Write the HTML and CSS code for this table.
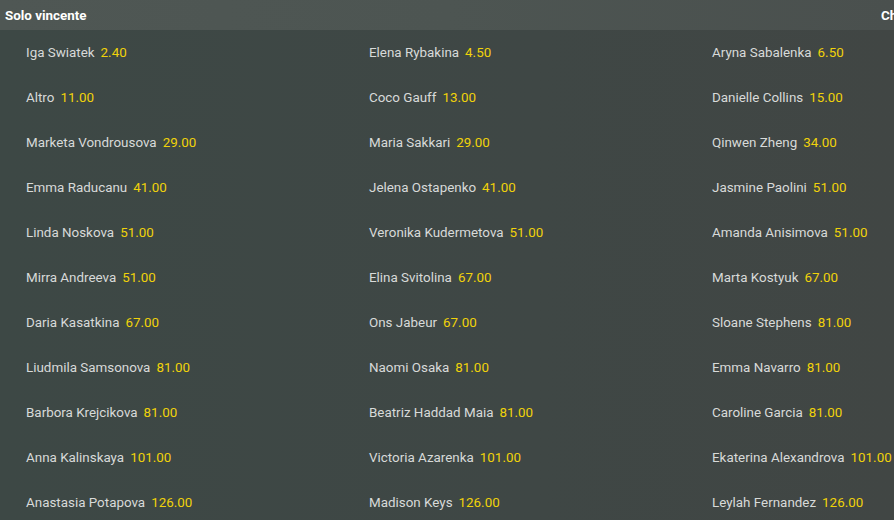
FILE: index.html
```html
<!DOCTYPE html>
<html lang="it">
<head>
<meta charset="utf-8">
<title>Solo vincente</title>
<link rel="stylesheet" href="styles.css">
</head>
<body>
<div class="market">
  <div class="tabs">
    <div class="tab tab-first">Solo vincente</div>
    <div class="tab">Chi vincerà</div>
  </div>
  <div class="grid">
    <div class="cell"><span class="name">Iga Swiatek</span><span class="odds">2.40</span></div>
    <div class="cell"><span class="name">Elena Rybakina</span><span class="odds">4.50</span></div>
    <div class="cell"><span class="name">Aryna Sabalenka</span><span class="odds">6.50</span></div>
    <div class="cell"><span class="name">Altro</span><span class="odds">11.00</span></div>
    <div class="cell"><span class="name">Coco Gauff</span><span class="odds">13.00</span></div>
    <div class="cell"><span class="name">Danielle Collins</span><span class="odds">15.00</span></div>
    <div class="cell"><span class="name">Marketa Vondrousova</span><span class="odds">29.00</span></div>
    <div class="cell"><span class="name">Maria Sakkari</span><span class="odds">29.00</span></div>
    <div class="cell"><span class="name">Qinwen Zheng</span><span class="odds">34.00</span></div>
    <div class="cell"><span class="name">Emma Raducanu</span><span class="odds">41.00</span></div>
    <div class="cell"><span class="name">Jelena Ostapenko</span><span class="odds">41.00</span></div>
    <div class="cell"><span class="name">Jasmine Paolini</span><span class="odds">51.00</span></div>
    <div class="cell"><span class="name">Linda Noskova</span><span class="odds">51.00</span></div>
    <div class="cell"><span class="name">Veronika Kudermetova</span><span class="odds">51.00</span></div>
    <div class="cell"><span class="name">Amanda Anisimova</span><span class="odds">51.00</span></div>
    <div class="cell"><span class="name">Mirra Andreeva</span><span class="odds">51.00</span></div>
    <div class="cell"><span class="name">Elina Svitolina</span><span class="odds">67.00</span></div>
    <div class="cell"><span class="name">Marta Kostyuk</span><span class="odds">67.00</span></div>
    <div class="cell"><span class="name">Daria Kasatkina</span><span class="odds">67.00</span></div>
    <div class="cell"><span class="name">Ons Jabeur</span><span class="odds">67.00</span></div>
    <div class="cell"><span class="name">Sloane Stephens</span><span class="odds">81.00</span></div>
    <div class="cell"><span class="name">Liudmila Samsonova</span><span class="odds">81.00</span></div>
    <div class="cell"><span class="name">Naomi Osaka</span><span class="odds">81.00</span></div>
    <div class="cell"><span class="name">Emma Navarro</span><span class="odds">81.00</span></div>
    <div class="cell"><span class="name">Barbora Krejcikova</span><span class="odds">81.00</span></div>
    <div class="cell"><span class="name">Beatriz Haddad Maia</span><span class="odds">81.00</span></div>
    <div class="cell"><span class="name">Caroline Garcia</span><span class="odds">81.00</span></div>
    <div class="cell"><span class="name">Anna Kalinskaya</span><span class="odds">101.00</span></div>
    <div class="cell"><span class="name">Victoria Azarenka</span><span class="odds">101.00</span></div>
    <div class="cell"><span class="name">Ekaterina Alexandrova</span><span class="odds">101.00</span></div>
    <div class="cell"><span class="name">Anastasia Potapova</span><span class="odds">126.00</span></div>
    <div class="cell"><span class="name">Madison Keys</span><span class="odds">126.00</span></div>
    <div class="cell"><span class="name">Leylah Fernandez</span><span class="odds">126.00</span></div>
  </div>
</div>
</body>
</html>
```
FILE: styles.css
```css
html, body {
  margin: 0;
  padding: 0;
  height: 100%;
}
body {
  background: linear-gradient(90deg, #3d4845 0%, #3f4745 60%, #414644 100%);
  font-family: Roboto, "Liberation Sans", Arial, sans-serif;
  overflow: hidden;
}
.market {
  width: 894px;
  height: 520px;
  overflow: hidden;
}
.tabs {
  height: 30px;
  display: flex;
  align-items: center;
  background: linear-gradient(90deg, #4f5754 0%, #4d5552 50%, #4a504e 100%);
  white-space: nowrap;
  overflow: hidden;
}
.tab {
  flex: 0 0 auto;
  color: #ffffff;
  font-weight: 700;
  font-size: 13.4px;
}
.tab-first {
  width: 881px;
  padding-left: 5px;
  box-sizing: border-box;
}
.grid {
  display: grid;
  grid-template-columns: repeat(3, 343px);
  grid-auto-rows: 45px;
}
.cell {
  display: flex;
  align-items: center;
  gap: 6px;
  padding-left: 26px;
  white-space: nowrap;
  font-size: 13.4px;
}
.name {
  color: #d8dad9;
}
.odds {
  color: #f0d20a;
}
```
